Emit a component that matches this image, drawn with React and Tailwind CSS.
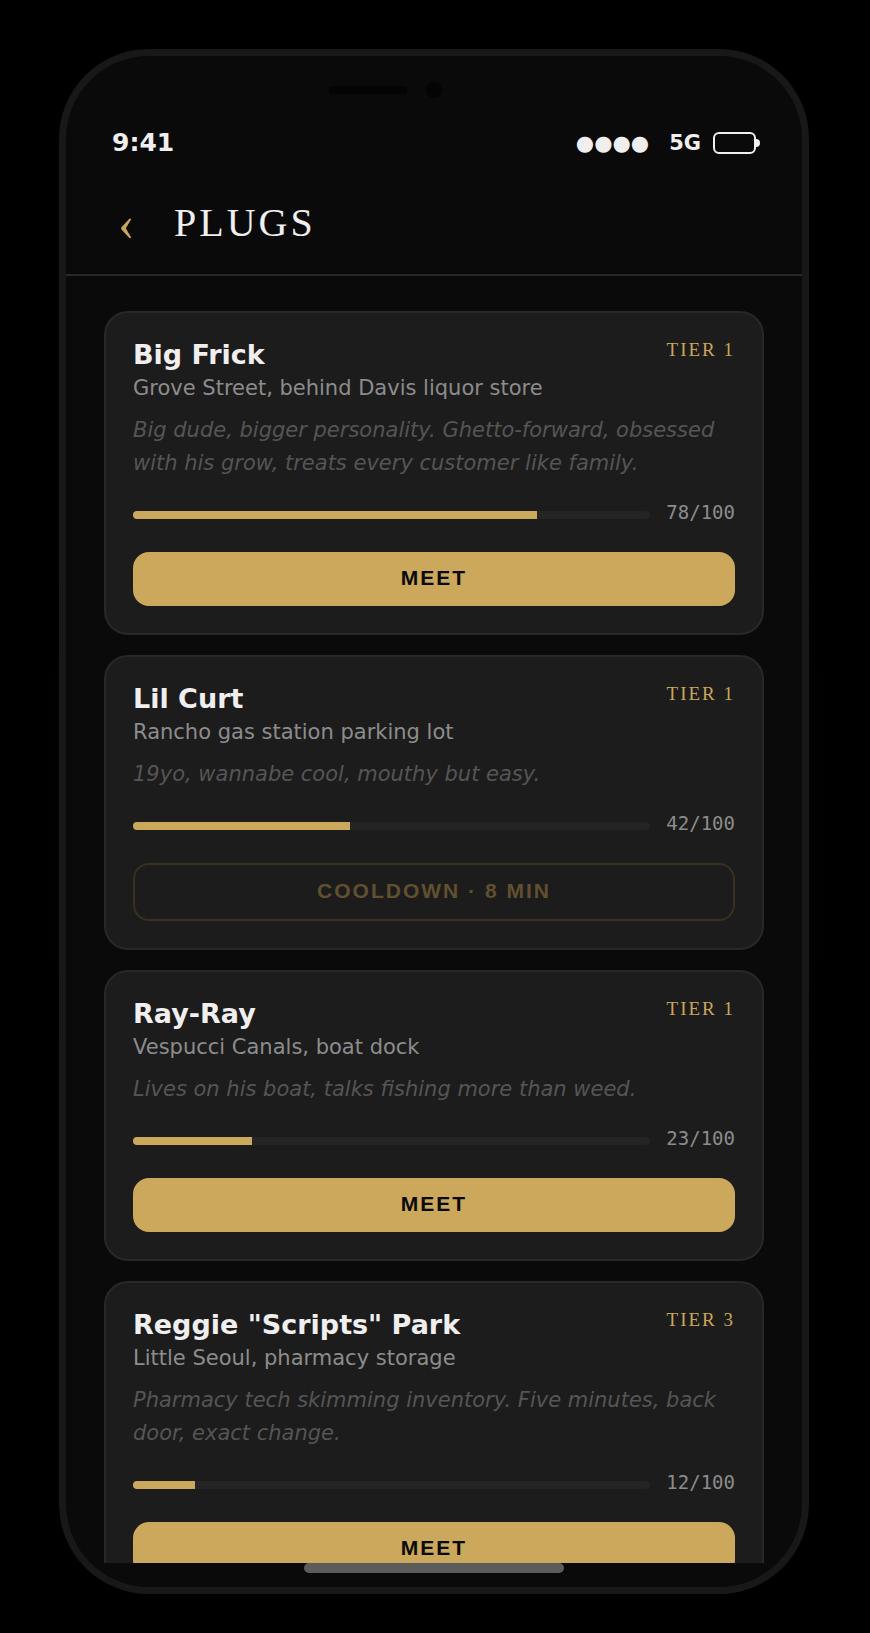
const PLUGS = [
  {
    name: 'Big Frick',
    tier: 1,
    place: 'Grove Street, behind Davis liquor store',
    bio: 'Big dude, bigger personality. Ghetto-forward, obsessed with his grow, treats every customer like family.',
    rep: 78,
  },
  {
    name: 'Lil Curt',
    tier: 1,
    place: 'Rancho gas station parking lot',
    bio: '19yo, wannabe cool, mouthy but easy.',
    rep: 42,
    cooldown: 8,
  },
  {
    name: 'Ray-Ray',
    tier: 1,
    place: 'Vespucci Canals, boat dock',
    bio: 'Lives on his boat, talks fishing more than weed.',
    rep: 23,
  },
  {
    name: 'Reggie "Scripts" Park',
    tier: 3,
    place: 'Little Seoul, pharmacy storage',
    bio: 'Pharmacy tech skimming inventory. Five minutes, back door, exact change.',
    rep: 12,
  },
];

const BUTTON_BASE = "w-full rounded-2xl pt-[14px] pb-[16px] font-['Liberation_Sans',sans-serif] text-[21px] leading-[24px] font-bold tracking-[2px]";

function StatusBar() {
  return (
    <div className="flex shrink-0 items-center justify-between px-[46px] pt-[30px] text-[#f0eeee] font-bold">
      <span className="text-[25px] leading-[30px]">9:41</span>
      <div className="flex items-center text-[21px] leading-[26px]">
        <span>●●●●</span>
        <span className="ml-5">5G</span>
        <span className="relative ml-3 h-[22px] w-[43px] rounded-md border-2 border-[#f0eeee]">
          <span className="absolute top-[5px] -right-[6px] h-2 w-1 rounded-r-sm bg-[#f0eeee]" />
        </span>
      </div>
    </div>
  );
}

function PlugCard({ plug }) {
  return (
    <article className="shrink-0 rounded-3xl border-2 border-[#282828] bg-[#1c1c1c] px-[27px] pt-[26px] pb-[27px]">
      <div className="flex items-start justify-between">
        <div>
          <h2 className="text-[27px] leading-[32px] font-bold text-[#f0eeee]">{plug.name}</h2>
          <p className="mt-1 text-[21px] leading-[26px] text-[#8c8c8c]">{plug.place}</p>
        </div>
        <span className="font-['Liberation_Serif',serif] text-[19px] leading-[22px] tracking-[2px] text-[#c9a65a]">
          TIER {plug.tier}
        </span>
      </div>

      <p className="mt-[13px] text-[21px] leading-[33px] text-[#555] italic">{plug.bio}</p>

      <div className="mt-[25px] flex items-end gap-4">
        <div className="h-2 flex-1 overflow-hidden rounded-sm bg-[#242424]">
          <div className="h-full bg-[#cba85c]" style={{ width: `${plug.rep}%` }} />
        </div>
        <span className="font-['DejaVu_Sans_Mono',monospace] text-[19px] leading-[14px] text-[#8c8c8c]">
          {plug.rep}/100
        </span>
      </div>

      <div className="mt-[33px]">
        {plug.cooldown ? (
          <button disabled className={`${BUTTON_BASE} border-2 border-[#3a3020] text-[#61502f]`}>
            COOLDOWN · {plug.cooldown} MIN
          </button>
        ) : (
          <button className={`${BUTTON_BASE} bg-[#cba85c] text-[#0a0a0a]`}>MEET</button>
        )}
      </div>
    </article>
  );
}

export default function App() {
  return (
    <div className="h-screen bg-[radial-gradient(ellipse_at_center,#0a0a0a_0%,#000_75%)] pt-[49px] pr-[61px] pb-[39px] pl-[59px] font-['DejaVu_Sans',sans-serif]">
      <div className="flex h-full flex-col overflow-hidden rounded-[90px] border-[7px] border-[#181818] bg-[#0a0a0a] shadow-[0_20px_60px_#000]">
        {/* Speaker + camera */}
        <div className="grid shrink-0 grid-cols-[1fr_auto_1fr] items-center gap-[19px] pt-[26px]">
          <div className="h-2 w-[78px] justify-self-end rounded-full bg-[#040404]" />
          <div className="size-4 rounded-full bg-[#040404]" />
        </div>

        <StatusBar />

        <header className="flex shrink-0 items-center border-b-2 border-[#282828] px-[46px] pt-[42px] pb-[28px]">
          <button aria-label="Back" className="w-[62px] pl-[6px] text-left font-['Liberation_Serif',serif] text-[50px] leading-[46px] text-[#c9a65a]">
            ‹
          </button>
          <h1 className="font-['Liberation_Serif',serif] text-[40px] leading-[46px] tracking-[3px] text-[#f0eeee]">PLUGS</h1>
        </header>

        <main className="flex min-h-0 flex-1 flex-col gap-5 overflow-y-auto px-[38px] pt-[35px] [scrollbar-width:none]">
          {PLUGS.map((plug) => (
            <PlugCard key={plug.name} plug={plug} />
          ))}
        </main>

        {/* Home indicator */}
        <div className="mx-auto mb-[14px] h-[10px] w-[260px] shrink-0 rounded-full bg-[#5c5c5c]" />
      </div>
    </div>
  );
}
